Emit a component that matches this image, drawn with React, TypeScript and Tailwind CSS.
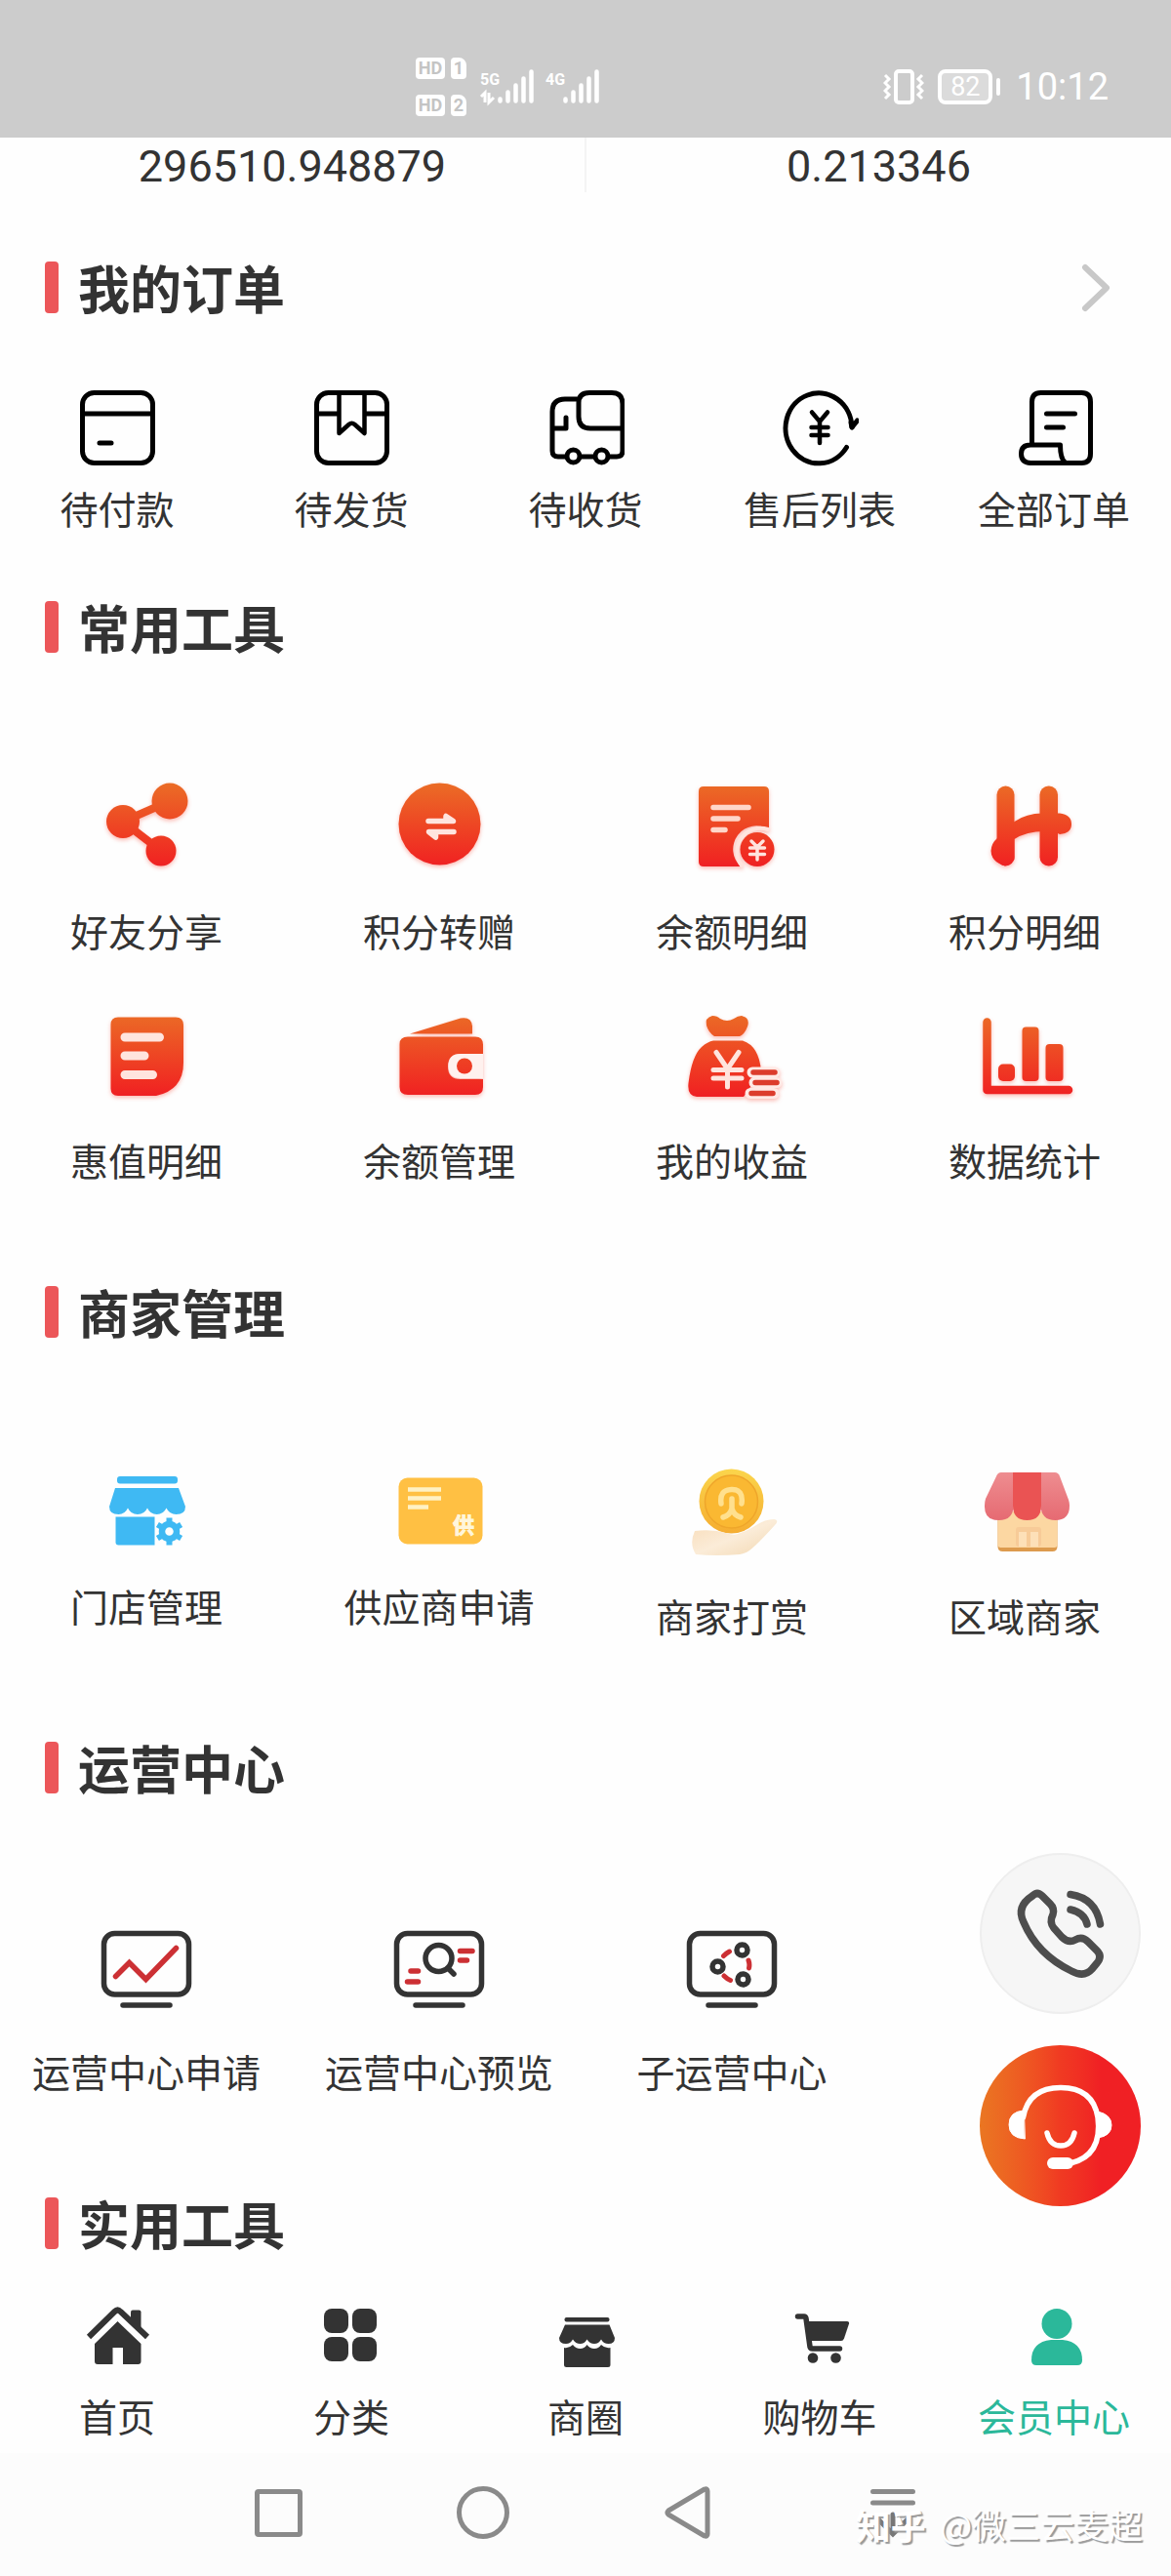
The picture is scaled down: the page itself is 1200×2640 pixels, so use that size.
import type { ReactNode } from 'react';
import clsx from 'clsx';

type Item = { label: string; icon: ReactNode };

const INK = '#333333';
const RED = '#cc3034';
const TEAL = '#2bb89a';
const PALE = '#ffe4de';

/* ---------- status bar ---------- */

function SimBadge({ slot }: { slot: string }) {
  return (
    <div className="flex gap-1.5">
      <span className="flex h-[22px] w-[30px] items-center justify-center rounded bg-white font-[Roboto,sans-serif] text-[18px] font-bold leading-[22px] text-[#c4c4c4]">
        HD
      </span>
      <span className="flex h-[22px] w-4 items-center justify-center rounded rounded-tr-lg bg-white font-[Roboto,sans-serif] text-[18px] font-bold leading-[22px] text-[#c4c4c4]">
        {slot}
      </span>
    </div>
  );
}

function Signal({ type, transfer = false }: { type: string; transfer?: boolean }) {
  return (
    <svg width="55" height="36" viewBox="0 0 55 36" fill="none" stroke="#fff" className="overflow-visible">
      <text x="0" y="16" fill="#fff" stroke="none" className="font-[Roboto,sans-serif] text-[16px] font-bold">
        {type}
      </text>
      {transfer && <path d="M1 28l4-4v10M9 24v10l5-5" strokeWidth="3" />}
      <path d="M20.500 30.500v2M28.500 23.500v9M36.500 16.500v16M44.500 9.500v23M52.500 2.500v30" strokeWidth="4.500" strokeLinecap="round" />
    </svg>
  );
}

function StatusBar() {
  return (
    <header className="flex h-[141px] items-center justify-between bg-[#cccccc] pl-[426px] pr-16 pt-9 text-white">
      <div className="flex items-center">
        <div className="flex flex-col gap-4">
          <SimBadge slot="1" />
          <SimBadge slot="2" />
        </div>
        <div className="ml-3.5 flex gap-3">
          <Signal type="5G" transfer />
          <Signal type="4G" />
        </div>
      </div>
      <div className="flex items-center font-[Roboto,sans-serif]">
        <svg width="42" height="36" viewBox="0 0 42 36" fill="none" stroke="#fff">
          <rect x="13" y="2" width="17" height="32" rx="3" strokeWidth="4" />
          <path d="M2 6l4 4-4 4 4 4-4 4 4 4-4 4M40 6l-4 4 4 4-4 4 4 4-4 4 4 4" strokeWidth="3" />
        </svg>
        <div className="ml-3.5 flex h-9 w-14 items-center justify-center rounded-lg border-4 border-white bg-white/30 text-[27px] leading-7">
          82
        </div>
        <div className="ml-1 h-[18px] w-1 rounded-full bg-white" />
        <time className="ml-4 text-[38px] leading-10">10:12</time>
      </div>
    </header>
  );
}

/* ---------- order icons ---------- */

function OrderSvg({ children }: { children: ReactNode }) {
  return (
    <svg
      width="80"
      height="80"
      viewBox="0 0 80 80"
      fill="none"
      stroke="#000"
      strokeWidth="5"
      strokeLinecap="round"
      strokeLinejoin="round"
    >
      {children}
    </svg>
  );
}

const orders: Item[] = [
  {
    label: '待付款',
    icon: (
      <OrderSvg>
        <rect x="4.500" y="4.500" width="72" height="72" rx="12" />
        <path d="M4.500 26h72M22 56h12" />
      </OrderSvg>
    ),
  },
  {
    label: '待发货',
    icon: (
      <OrderSvg>
        <rect x="4.500" y="4.500" width="72" height="72" rx="12" />
        <path d="M4.500 26h22M54.500 26h22" />
        <path d="M27.500 5v41l10-9q3-2.500 6 0l10 9V5" strokeWidth="4.500" />
      </OrderSvg>
    ),
  },
  {
    label: '待收货',
    icon: (
      <OrderSvg>
        <path d="M33 11H19Q6 11 6 24v40q0 6 6 6h8M35 70h14M64 70h8q6 0 6-6V16Q78 4.500 67 4.500H44Q33 4.500 33 15v14q0 12 12 12h32M6 41h14V30" />
        <circle cx="27.500" cy="69.500" r="6.500" />
        <circle cx="56.500" cy="69.500" r="6.500" />
      </OrderSvg>
    ),
  },
  {
    label: '售后列表',
    icon: (
      <OrderSvg>
        <path d="M67.500 60.500A34 36 0 1 1 73 40l5.500-7" />
        <path d="M73 40l-1-5" />
        <path d="M32 24.500l8 9.500 8-9.500M40 34v22M31.500 40h17M31.500 48h17" strokeWidth="4.500" />
      </OrderSvg>
    ),
  },
  {
    label: '全部订单',
    icon: (
      <OrderSvg>
        <path d="M17.500 57V14q0-9.500 9-9.500h42q9 0 9 9.500v53q0 9.500-9 9.500H16Q6.500 76 6.500 67T16 58h30.500q0 14 5 18M32.500 26h29M32.500 40h17" />
      </OrderSvg>
    ),
  },
];

/* ---------- red tool icons ---------- */

function ToolSvg({ id, children }: { id: string; children: ReactNode }) {
  return (
    <svg
      width="96"
      height="96"
      viewBox="0 0 96 96"
      className="overflow-visible drop-shadow-[0_2px_2px_rgba(245,60,40,0.35)]"
      fill={`url(#${id})`}
      strokeLinecap="round"
      strokeLinejoin="round"
    >
      <defs>
        <linearGradient id={id} gradientUnits="userSpaceOnUse" x1="0" y1="6" x2="0" y2="91">
          <stop offset="0" stopColor="#eb6c26" />
          <stop offset="0.900" stopColor="#f02822" />
          <stop offset="1" stopColor="#ee2024" />
        </linearGradient>
      </defs>
      {children}
    </svg>
  );
}

const tools: Item[] = [
  {
    label: '好友分享',
    icon: (
      <ToolSvg id="g-share">
        <path d="M72 24L24 45l39 30" fill="none" stroke="url(#g-share)" strokeWidth="8" />
        <circle cx="72" cy="24" r="18.500" />
        <circle cx="24" cy="45" r="17" />
        <circle cx="63" cy="75" r="15.500" />
      </ToolSvg>
    ),
  },
  {
    label: '积分转赠',
    icon: (
      <ToolSvg id="g-swap">
        <circle cx="48.500" cy="47.500" r="42" />
        <path d="M37 44.500h25.500L55 39.500v4M63 55.500H37.500l7 5.500v-4" fill="none" stroke={PALE} strokeWidth="5.500" />
      </ToolSvg>
    ),
  },
  {
    label: '余额明细',
    icon: (
      <ToolSvg id="g-bill">
        <path d="M19 9h62q5 0 5 5v39A24 24 0 0 0 57 91H19q-5 0-5-5V14q0-5 5-5z" />
        <path d="M85 53A24 24 0 0 0 58 90" fill="none" stroke={PALE} strokeWidth="4" />
        <path d="M29 30.500h36M29 42h25M29 53.500h12" fill="none" stroke="#ffd6c9" strokeWidth="5.500" />
        <circle cx="74" cy="73.500" r="17.500" />
        <path d="M68 65l6 6 6-6M74 71v13M66.500 72h15M66.500 78.500h15" fill="none" stroke={PALE} strokeWidth="3.500" />
      </ToolSvg>
    ),
  },
  {
    label: '积分明细',
    icon: (
      <ToolSvg id="g-points">
        <rect x="19.500" y="8.500" width="18" height="82" rx="9" />
        <rect x="63.500" y="8.500" width="18.500" height="82" rx="9" />
        <path d="M13.500 75Q14 67 20 62Q32 52 37.500 45Q50 36.500 66 36.500H84Q96 38 96 47.500T84 58Q80 55 68 55Q50 55 37.500 63V84L28 90.500Q13.500 86 13.500 75z" />
      </ToolSvg>
    ),
  },
  {
    label: '惠值明细',
    icon: (
      <ToolSvg id="g-doc">
        <path d="M19 10.500h59q8 0 8 8V57Q86 85 58 91H19q-7.500 0-7.500-7.500V18q0-7.500 7.500-7.500z" />
        <path d="M26 31h35.500M26 50h20M26 69.500h28.500" fill="none" stroke={PALE} strokeWidth="9" />
      </ToolSvg>
    ),
  },
  {
    label: '余额管理',
    icon: (
      <ToolSvg id="g-wallet">
        <path d="M18 27.500L70 11.500q11-2 12 8v8z" />
        <path d="M16 30.500h69q8 0 8 8v9.500H70q-13 0-13 13t13 13h23V82q0 8-8 8H16q-8.500 0-8.500-8V38q0-7.500 8.500-7.500z" />
        <path d="M93 48H70q-12.500 0-12.500 12.500T70 73h23z" fill="#fff1ee" />
        <circle cx="74" cy="60.500" r="8" />
      </ToolSvg>
    ),
  },
  {
    label: '我的收益',
    icon: (
      <ToolSvg id="g-bag">
        <path d="M28 9q5 0 8 3 7 4 14 0 4-3 8-3 9 2 6 11-3 8-8 10H30Q24 26 22 19q-2-8 6-10z" />
        <path d="M29 34.500h30Q76 40 78 66l-18 26H12Q2 91 3.500 78 7 50 17 41q6-5.500 12-6.500z" />
        <path d="M32 46.500l11.500 17L55 46.500M43.500 64v18M29 64.500h29M29 73h29" fill="none" stroke={PALE} strokeWidth="5" />
        <path d="M69 67h23M71 77.500h23M67 88.500h24" fill="none" stroke="#ffe9e5" strokeWidth="11" />
        <path d="M70 67h22M72 77.500h22M68 88.500h22" fill="none" stroke="#dc3c2c" strokeWidth="5.500" />
      </ToolSvg>
    ),
  },
  {
    label: '数据统计',
    icon: (
      <ToolSvg id="g-chart">
        <path d="M9.500 15.500V85H93" fill="none" stroke="url(#g-chart)" strokeWidth="8.500" />
        <rect x="21" y="58.500" width="17" height="17.500" rx="5" />
        <rect x="45.500" y="20.500" width="17" height="55.500" rx="4" />
        <rect x="69.500" y="38" width="18" height="38" rx="4" />
      </ToolSvg>
    ),
  },
];

/* ---------- merchant icons ---------- */

const merchants: Item[] = [
  {
    label: '门店管理',
    icon: (
      <svg width="96" height="86" viewBox="0 0 96 86" fill="#3fb9f3">
        <rect x="18" y="14" width="62" height="7.500" rx="3" />
        <path d="M16 26h65l7 19q0 8-9.500 8-7 0-10-6.500-3 6.500-9.800 6.500t-9.700-6.500Q46 53 39 53t-10-6.500Q26 53 19.500 53 10 53 10 45z" />
        <path d="M16.500 55.500h40v29H19.500q-3 0-3-3z" />
        <circle cx="71.500" cy="70.500" r="7.500" fill="none" stroke="#3fb9f3" strokeWidth="6.500" />
        <path
          d="M71.500 56.500v5M71.500 79.500v5M59.400 63.500l4.300 2.500M79.300 75l4.300 2.500M83.600 63.500L79.300 66M63.700 75l-4.300 2.500"
          stroke="#3fb9f3"
          strokeWidth="6"
        />
      </svg>
    ),
  },
  {
    label: '供应商申请',
    icon: (
      <svg width="96" height="86" viewBox="0 0 96 86">
        <rect x="6.500" y="15.500" width="86" height="68" rx="9" fill="#ffc043" />
        <path d="M16 27.500h34M16 36.500h34M16 45.500h21" stroke="#fff1c4" strokeWidth="4.500" />
        <text x="62" y="72" fill="#fff6dc" stroke="#fff6dc" strokeWidth="1" className="text-[22px] font-bold">
          供
        </text>
      </svg>
    ),
  },
  {
    label: '商家打赏',
    icon: (
      <svg width="96" height="96" viewBox="0 0 96 96" fill="none" strokeLinecap="round">
        <defs>
          <linearGradient id="g-hand" x1="0" y1="0" x2="1" y2="1">
            <stop offset="0" stopColor="#f8dcb8" />
            <stop offset="0.500" stopColor="#fbecd8" />
            <stop offset="1" stopColor="#f2d7b0" />
          </linearGradient>
          <linearGradient id="g-coin" x1="0" y1="0" x2="0" y2="1">
            <stop offset="0" stopColor="#fbd54c" />
            <stop offset="1" stopColor="#f5ad31" />
          </linearGradient>
        </defs>
        <circle cx="47.500" cy="39.500" r="33" fill="url(#g-coin)" />
        <circle cx="47.500" cy="40" r="27" fill="#fab832" stroke="#efa62b" strokeWidth="1.500" />
        <path d="M37 42q-2-14 10.500-14.500T58 42M48 37v10q-2 7-9 9M48 47q2 7 9 9" stroke="#ffe08e" strokeWidth="5.500" />
        <path
          d="M10 70q18-2 32 2 8 3 12 1 10-3 19-9 9-6 18-6 6 1 1 6Q74 84 66 90q-4 3-10 4-24 2-45 0-7-11-1-24z"
          fill="url(#g-hand)"
        />
      </svg>
    ),
  },
  {
    label: '区域商家',
    icon: (
      <svg width="96" height="96" viewBox="0 0 96 96">
        <defs>
          <linearGradient id="g-awning" x1="0" y1="0" x2="0" y2="1">
            <stop offset="0" stopColor="#ee8d90" />
            <stop offset="1" stopColor="#e66a72" />
          </linearGradient>
        </defs>
        <path d="M20.500 50h61v36q0 5-5 5h-51q-5 0-5-5z" fill="#dd9b4e" />
        <path d="M20.500 50h61v34q0 3-3 3h-55q-3 0-3-3z" fill="#fcd7a2" />
        <rect x="39" y="66" width="26" height="20" rx="3" fill="#f7cb98" />
        <path d="M42 71h8v15h-8zM54 71h8v15h-8z" fill="#fde0b8" />
        <path d="M24 10h12.500v34q0 15-15 15T7 44q0-4 1-7l11-23q1.500-4 5-4z" fill="url(#g-awning)" />
        <path d="M64.500 10H79q3.500 0 5 4l9 24q1 3 1 6 0 15-14.500 15t-15-15z" fill="url(#g-awning)" />
        <path d="M36 10h29v34q0 15-14.500 15T36 44z" fill="#ea5353" />
      </svg>
    ),
  },
];

/* ---------- operation centre icons ---------- */

function MonitorSvg({ children }: { children: ReactNode }) {
  return (
    <svg
      width="96"
      height="96"
      viewBox="0 0 96 96"
      fill="none"
      stroke={INK}
      strokeWidth="5.500"
      strokeLinecap="round"
    >
      <rect x="4.500" y="15.500" width="87" height="62.500" rx="11" />
      <path d="M24 89h48" />
      {children}
    </svg>
  );
}

const operations: Item[] = [
  {
    label: '运营中心申请',
    icon: (
      <MonitorSvg>
        <path d="M16.500 59.500l14-14 17 17 31-32" stroke={RED} />
      </MonitorSvg>
    ),
  },
  {
    label: '运营中心预览',
    icon: (
      <MonitorSvg>
        <circle cx="47.500" cy="41" r="13.500" />
        <path d="M57.500 51.500l5.500 5.500" />
        <path d="M69.500 33.500h12.500M69.500 43h7M19 54h7.500M15.500 65h11" stroke={RED} />
      </MonitorSvg>
    ),
  },
  {
    label: '子运营中心',
    icon: (
      <MonitorSvg>
        <circle cx="58.500" cy="32.500" r="5.500" />
        <circle cx="33.500" cy="49.500" r="5.500" />
        <circle cx="59.500" cy="62.500" r="5.500" />
        <path d="M39.500 38.500q3-3 6-4.500M65 43q1.500 4 .5 8M40 59q3 3 6.500 4.500" stroke={RED} strokeWidth="5" />
      </MonitorSvg>
    ),
  },
];

/* ---------- tab bar icons ---------- */

const tabs: (Item & { active?: boolean })[] = [
  {
    label: '首页',
    icon: (
      <svg width="72" height="64" viewBox="0 0 72 64" fill={INK}>
        <path d="M50 6.500q0-2 2-2h6.500q2 0 2 2V25L50 14.500z" />
        <path d="M7 32L33.500 6q3-3 6 0L67 32" fill="none" stroke={INK} strokeWidth="6" strokeLinejoin="round" />
        <path d="M36.500 16L60.500 39v18q0 3-3 3H42V43H31.500v17H16q-3 0-3-3V39z" />
      </svg>
    ),
  },
  {
    label: '分类',
    icon: (
      <svg width="72" height="64" viewBox="0 0 72 64" fill={INK}>
        <rect x="8" y="3" width="25" height="25" rx="8" />
        <rect x="37" y="3" width="25" height="25" rx="8" />
        <rect x="8" y="32" width="25" height="25" rx="8" />
        <rect x="37" y="32" width="25" height="25" rx="8" />
      </svg>
    ),
  },
  {
    label: '商圈',
    icon: (
      <svg width="72" height="64" viewBox="0 0 72 64" fill={INK}>
        <rect x="14.500" y="12" width="46" height="4.500" rx="2" />
        <path d="M15 19.500h45.500L66 33q0 6-6.500 6-5 0-7.500-4.500Q49.500 39 45 39t-7.500-4.500Q35 39 30.500 39T23 34.500Q20.500 39 16 39q-7 0-7-6z" />
        <path d="M14 43q5 1 9-3 3 4 7.500 4t7-4q3 4 7.500 4t7-4q4 4 9.500 3v17.500q0 2.500-2.500 2.500h-42.500q-2.500 0-2.500-2.500z" />
      </svg>
    ),
  },
  {
    label: '购物车',
    icon: (
      <svg width="72" height="64" viewBox="0 0 72 64" fill={INK}>
        <path d="M13.500 11h6.500q1.500 0 2 2l4 29q.5 2 2.500 2h28" fill="none" stroke={INK} strokeWidth="5.500" strokeLinecap="round" />
        <path d="M22 16h42q2.500 0 2 2.500l-5 15q-1 2.500-3 2.500H25z" />
        <circle cx="29" cy="53.500" r="5.300" />
        <circle cx="52.500" cy="53.500" r="5.300" />
      </svg>
    ),
  },
  {
    label: '会员中心',
    active: true,
    icon: (
      <svg width="72" height="64" viewBox="0 0 72 64" fill={TEAL}>
        <circle cx="39" cy="18.500" r="15.500" />
        <path d="M33 35h12q20 2 20 21 0 5-5 5H18q-5 0-5-5 0-19 20-21z" />
      </svg>
    ),
  },
];

/* ---------- blocks ---------- */

function SectionTitle({ title, more = false }: { title: string; more?: boolean }) {
  return (
    <div className="flex h-[53px] items-center pl-[46px] pr-[60px]">
      <span className="h-full w-3.5 rounded bg-[#ec5659]" />
      <h2 className="ml-5 flex-1 text-[53px] font-bold leading-[53px]">{title}</h2>
      {more && (
        <a href="#orders" aria-label="全部">
          <svg width="32" height="50" viewBox="0 0 32 50" fill="none" stroke="#c8c8c8" strokeWidth="6" strokeLinecap="round" strokeLinejoin="round">
            <path d="M4 4l22 21L4 46" />
          </svg>
        </a>
      )}
    </div>
  );
}

function IconLink({ item, gap }: { item: Item; gap: string }) {
  return (
    <a href="#" className={clsx('flex flex-col items-center', gap)}>
      {item.icon}
      <span className="whitespace-nowrap text-[39px] leading-[60px]">{item.label}</span>
    </a>
  );
}

function ToolSection({ title, items }: { title: string; items: Item[] }) {
  return (
    <section className="mb-[100px]">
      <SectionTitle title={title} />
      <div className="mt-32 grid grid-cols-4 items-start gap-y-[49px]">
        {items.map((item) => (
          <IconLink key={item.label} item={item} gap="gap-[30px]" />
        ))}
      </div>
    </section>
  );
}

function FloatButtons() {
  return (
    <div className="absolute bottom-[379px] right-[31px] flex flex-col gap-8">
      <button aria-label="电话" className="size-[165px] rounded-full border-2 border-[#eeeeee] bg-[#f6f6f6]">
        <svg viewBox="2 2 161 161" fill="none" stroke="#4d4d4d" strokeWidth="7.500" strokeLinecap="round" strokeLinejoin="round">
          <path d="M54 44q5-5 10 0l8 8q5 5 3 11-4 8 1 14l8 9q7 7 14 3 7-4 13 2l9 9q6 6 0 13l-5 6q-8 9-21 2Q59 104 45 71q-8-16 9-27z" />
          <path d="M93 58q14 3 17 15M93 42.500q26 4 30.500 30.500" />
        </svg>
      </button>
      <button
        aria-label="在线客服"
        className="size-[165px] rounded-full bg-linear-to-r from-[#ea7622] via-[#f03a22] via-50% to-[#f02024] to-75%"
      >
        <svg viewBox="0 0 165 165" fill="none" stroke="#fff" strokeWidth="5.500" strokeLinecap="round">
          <path d="M44.500 74Q50 43.500 83 43.500T121 74Q126 113 93 121" />
          <path d="M45 67q-15 1-15 14.500T46 96zM121 68q14 3 14 14t-14 13z" fill="#fff" strokeWidth="1" strokeLinejoin="round" />
          <path d="M75 121h15" strokeWidth="12" />
          <path d="M69 90q3 13 14 13t14-13" />
        </svg>
      </button>
    </div>
  );
}

function SystemNav() {
  return (
    <div className="relative h-[126px] bg-[#fcfcfc]">
      <div className="grid h-full grid-cols-4 items-center px-[180px] pb-1">
        <button aria-label="最近任务" className="mx-auto size-[49px] rounded border-5 border-[#8a8a8a]" />
        <button aria-label="主屏幕" className="mx-auto size-[54px] rounded-full border-5 border-[#8a8a8a]" />
        <button aria-label="返回" className="mx-auto">
          <svg width="48" height="54" viewBox="0 0 48 54" fill="none" stroke="#8a8a8a" strokeWidth="5" strokeLinejoin="round">
            <path d="M4 25L41 3q3-1 3 2v44q0 3-3 2L4 29q-2-2 0-4z" />
          </svg>
        </button>
        <button aria-label="收起" className="mx-auto">
          <svg width="48" height="54" viewBox="0 0 48 54" fill="none" stroke="#8a8a8a" strokeWidth="5" strokeLinecap="round">
            <path d="M3.500 5.500h41M3.500 17h41" />
            <path d="M24 29v19M9 34l15 15 15-15" stroke="#777" />
          </svg>
        </button>
      </div>
      <p className="absolute bottom-7 right-[29px] flex items-center gap-3.5 whitespace-nowrap text-[35px] leading-[50px] text-white [text-shadow:2px_2px_1px_#999999]">
        <span className="text-[36px] font-bold">知乎</span>
        <span>@微三云麦超</span>
      </p>
    </div>
  );
}

export default function App() {
  return (
    <div className="relative bg-[#fefefe] font-['Noto_Sans_CJK_SC',sans-serif] text-[#333333]">
      <StatusBar />

      <main>
        <div className="mb-[71px] flex h-14 divide-x-2 divide-[#f4f4f4] text-center font-[Roboto,sans-serif] text-[45px] leading-[59px]">
          <p className="flex-1">296510.948879</p>
          <p className="flex-1">0.213346</p>
        </div>

        <section id="orders" className="mb-[66px]">
          <SectionTitle title="我的订单" more />
          <div className="mt-[77px] grid grid-cols-5">
            {orders.map((item) => (
              <IconLink key={item.label} item={item} gap="gap-3" />
            ))}
          </div>
        </section>

        <ToolSection title="常用工具" items={tools} />
        <ToolSection title="商家管理" items={merchants} />
        <ToolSection title="运营中心" items={operations} />

        <SectionTitle title="实用工具" />
      </main>

      <nav className="grid grid-cols-5 pb-[9px] pt-[58px]">
        {tabs.map((tab) => (
          <a
            key={tab.label}
            href="#"
            className={clsx('flex flex-col items-center gap-[18px]', tab.active && 'text-[#2bb89a]')}
          >
            {tab.icon}
            <span className="text-[39px] leading-[60px]">{tab.label}</span>
          </a>
        ))}
      </nav>

      <SystemNav />
      <FloatButtons />
    </div>
  );
}
